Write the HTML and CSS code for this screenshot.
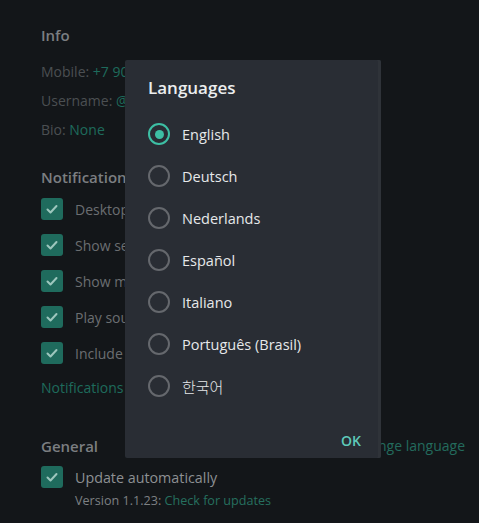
FILE: index.html
```html
<!DOCTYPE html>
<html>
<head>
<meta charset="utf-8">
<link rel="stylesheet" href="styles.css">
</head>
<body>
<div class="page">
  <div class="title">Info</div>
  <div class="info-list">
    <div class="info-row"><span class="label">Mobile:</span> <span class="link">+7 900 000 00 00</span></div>
    <div class="info-row"><span class="label">Username:</span> <span class="link">@username</span></div>
    <div class="info-row"><span class="label">Bio:</span> <span class="link">None</span></div>
  </div>
  <div class="title title-notif">Notifications</div>
  <div class="check-list">
    <div class="check-row"><span class="cb"><svg viewBox="0 0 22 22" width="22" height="22"><path d="M6.5 11.5l3 3 6-6.5" fill="none" stroke="#9cc6bd" stroke-width="2" stroke-linecap="round" stroke-linejoin="round"/></svg></span><span class="ctext">Desktop notifications</span></div>
    <div class="check-row"><span class="cb"><svg viewBox="0 0 22 22" width="22" height="22"><path d="M6.5 11.5l3 3 6-6.5" fill="none" stroke="#9cc6bd" stroke-width="2" stroke-linecap="round" stroke-linejoin="round"/></svg></span><span class="ctext">Show sender's name</span></div>
    <div class="check-row"><span class="cb"><svg viewBox="0 0 22 22" width="22" height="22"><path d="M6.5 11.5l3 3 6-6.5" fill="none" stroke="#9cc6bd" stroke-width="2" stroke-linecap="round" stroke-linejoin="round"/></svg></span><span class="ctext">Show message preview</span></div>
    <div class="check-row"><span class="cb"><svg viewBox="0 0 22 22" width="22" height="22"><path d="M6.5 11.5l3 3 6-6.5" fill="none" stroke="#9cc6bd" stroke-width="2" stroke-linecap="round" stroke-linejoin="round"/></svg></span><span class="ctext">Play sound</span></div>
    <div class="check-row"><span class="cb"><svg viewBox="0 0 22 22" width="22" height="22"><path d="M6.5 11.5l3 3 6-6.5" fill="none" stroke="#9cc6bd" stroke-width="2" stroke-linecap="round" stroke-linejoin="round"/></svg></span><span class="ctext">Include muted chats</span></div>
  </div>
  <div class="notif-link link">Notifications settings</div>
  <div class="general-row">
    <div class="title">General</div>
    <div class="link change">Change language</div>
  </div>
  <div class="check-row update-row"><span class="cb"><svg viewBox="0 0 22 22" width="22" height="22"><path d="M6.5 11.5l3 3 6-6.5" fill="none" stroke="#9cc6bd" stroke-width="2" stroke-linecap="round" stroke-linejoin="round"/></svg></span><span class="ctext bright">Update automatically</span></div>
  <div class="version">Version 1.1.23: <span class="link2">Check for updates</span></div>
</div>

<div class="dialog">
  <div class="dlg-title">Languages</div>
  <div class="radios">
    <div class="radio-row"><span class="radio checked"></span><span class="rtext">English</span></div>
    <div class="radio-row"><span class="radio"></span><span class="rtext">Deutsch</span></div>
    <div class="radio-row"><span class="radio"></span><span class="rtext">Nederlands</span></div>
    <div class="radio-row"><span class="radio"></span><span class="rtext">Español</span></div>
    <div class="radio-row"><span class="radio"></span><span class="rtext">Italiano</span></div>
    <div class="radio-row"><span class="radio"></span><span class="rtext">Português (Brasil)</span></div>
    <div class="radio-row"><span class="radio"></span><span class="rtext kr">한국어</span></div>
  </div>
  <div class="dlg-actions"><span class="ok">OK</span></div>
</div>
</body>
</html>
```
FILE: styles.css
```css
html, body {
  margin: 0;
  padding: 0;
  background: #131619;
  font-family: "Open Sans", "Noto Sans", sans-serif;
  width: 479px;
  height: 523px;
  overflow: hidden;
}
.page {
  padding: 25px 14px 0 41px;
}
.title {
  font-size: 15px;
  font-weight: 600;
  line-height: 20px;
  height: 20px;
  color: #7b7e81;
}
.info-list {
  margin-top: 12px;
}
.info-row {
  font-size: 14px;
  line-height: 29px;
  height: 29px;
  white-space: nowrap;
}
.label { color: #4b4f52; }
.link { color: #1e6b5c; }
.title-notif { margin-top: 23px; }
.check-list { margin-top: 4px; }
.check-row {
  display: flex;
  align-items: center;
  height: 36px;
  gap: 12px;
}
.cb {
  width: 22px;
  height: 22px;
  border-radius: 3px;
  background: #1f6b5d;
  display: flex;
  flex: none;
}
.ctext {
  font-size: 14px;
  color: #6b6e71;
  white-space: nowrap;
}
.ctext.bright { color: #8d9093; font-size: 14.3px; }
.notif-link {
  margin-top: 7px;
  font-size: 14px;
  line-height: 20px;
  height: 20px;
}
.general-row {
  margin-top: 38px;
  display: flex;
  justify-content: space-between;
  align-items: center;
}
.change {
  font-size: 14px;
  line-height: 20px;
  color: #236b5d;
}
.update-row {
  height: 30px;
  margin-top: 6px;
}
.version {
  padding-left: 34px;
  font-size: 12.6px;
  line-height: 18px;
  color: #7d8083;
}
.link2 { color: #26705f; }

.dialog {
  position: absolute;
  left: 125px;
  top: 60px;
  width: 256px;
  height: 398px;
  box-sizing: border-box;
  background: #292d34;
  border-radius: 2px;
  padding: 18px 20px 0 23px;
  box-shadow: inset -3px 0 0 #2f3339;
}
.dlg-title {
  font-size: 17px;
  font-weight: 600;
  line-height: 20px;
  color: #eceeef;
}
.radios {
  margin-top: 15px;
}
.radio-row {
  display: flex;
  align-items: center;
  height: 42px;
  gap: 12px;
}
.radio {
  width: 22px;
  height: 22px;
  box-sizing: border-box;
  border-radius: 50%;
  border: 2px solid #65686d;
  flex: none;
  display: flex;
  align-items: center;
  justify-content: center;
}
.radio.checked {
  border: 2px solid #3dbfa4;
}
.radio.checked::after {
  content: "";
  width: 9px;
  height: 9px;
  border-radius: 50%;
  background: #3dbfa4;
}
.rtext {
  font-size: 14.5px;
  color: #e6e8ea;
  white-space: nowrap;
}
.rtext.kr {
  font-family: "Noto Sans CJK KR", sans-serif;
  font-size: 15px;
  font-weight: 300;
}
.dlg-actions {
  display: flex;
  justify-content: flex-end;
  margin-top: 24px;
}
.ok {
  font-size: 14px;
  font-weight: 600;
  line-height: 20px;
  color: #5ec9ba;
}
```
